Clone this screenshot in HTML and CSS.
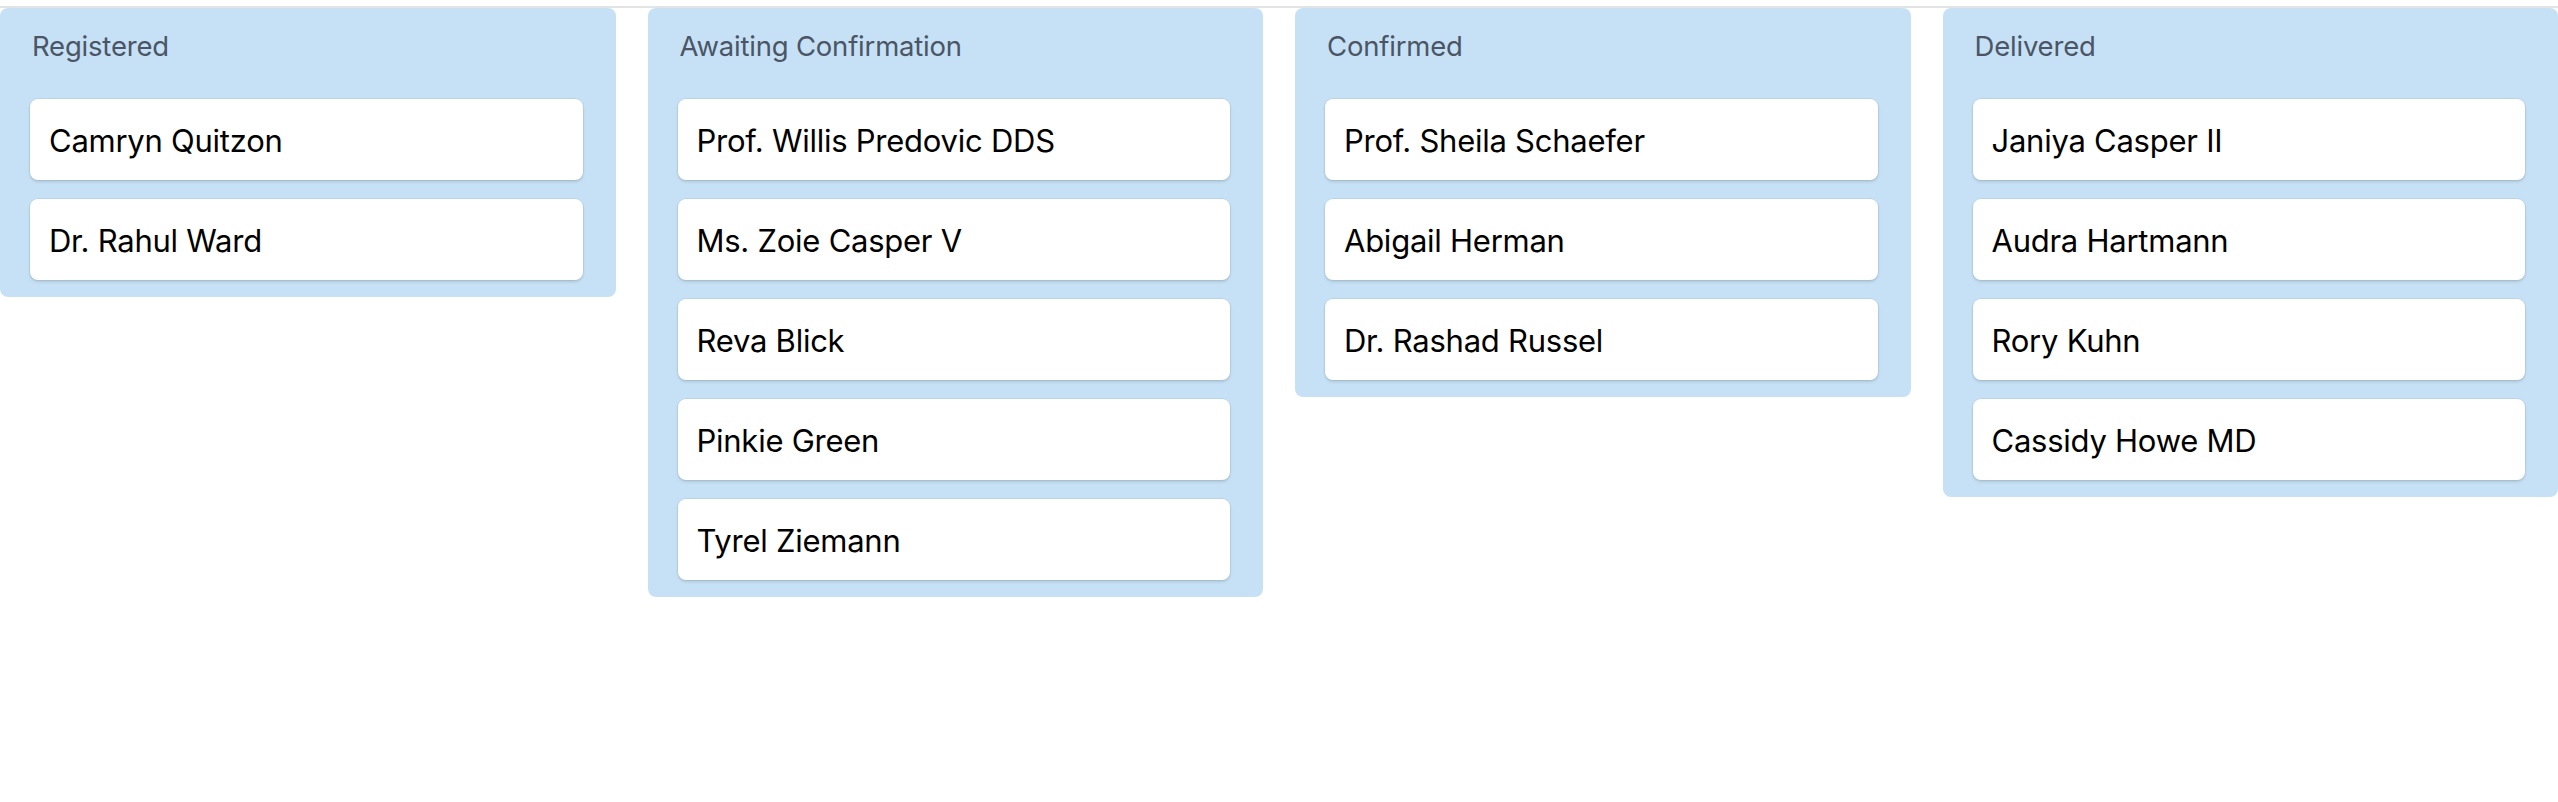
FILE: index.html
```html
<!DOCTYPE html>
<html lang="en">
<head>
<meta charset="utf-8">
<title>Board</title>
<link rel="stylesheet" href="styles.css">
</head>
<body>
<div class="topbar"></div>
<main class="board">
  <section class="column">
    <h2 class="column-title">Registered</h2>
    <div class="card">Camryn Quitzon</div>
    <div class="card">Dr. Rahul Ward</div>
  </section>
  <section class="column">
    <h2 class="column-title">Awaiting Confirmation</h2>
    <div class="card">Prof. Willis Predovic DDS</div>
    <div class="card">Ms. Zoie Casper V</div>
    <div class="card">Reva Blick</div>
    <div class="card">Pinkie Green</div>
    <div class="card">Tyrel Ziemann</div>
  </section>
  <section class="column">
    <h2 class="column-title">Confirmed</h2>
    <div class="card">Prof. Sheila Schaefer</div>
    <div class="card">Abigail Herman</div>
    <div class="card">Dr. Rashad Russel</div>
  </section>
  <section class="column">
    <h2 class="column-title">Delivered</h2>
    <div class="card">Janiya Casper II</div>
    <div class="card">Audra Hartmann</div>
    <div class="card">Rory Kuhn</div>
    <div class="card">Cassidy Howe MD</div>
  </section>
</main>
</body>
</html>
```
FILE: styles.css
```css
html, body {
  margin: 0;
  padding: 0;
  background: #ffffff;
}
body {
  font-family: Inter, "Noto Sans", "Liberation Sans", sans-serif;
  color: #000000;
}
.topbar {
  height: 6px;
  border-bottom: 2px solid #e3e3e3;
}
.board {
  display: flex;
  align-items: flex-start;
  gap: 32px;
  width: 2558px;
}
.column {
  flex: 1 1 0;
  background: #c6e1f5;
  border-radius: 8px;
  padding: 18px 33px 17px 30px;
  display: flex;
  flex-direction: column;
  gap: 19px;
}
.column-title {
  margin: 0 0 14px 2px;
  font-size: 27.5px;
  font-weight: 400;
  letter-spacing: -0.2px;
  line-height: 40px;
  color: #4b5565;
}
.card {
  background: #ffffff;
  height: 81px;
  box-sizing: border-box;
  border-radius: 8px;
  padding: 2px 19px 0;
  display: flex;
  align-items: center;
  font-size: 31px;
  letter-spacing: -0.25px;
  box-shadow: 0 0 0 1px rgba(0, 0, 0, 0.05), 0 2px 3px rgba(0, 0, 0, 0.12);
}
```
